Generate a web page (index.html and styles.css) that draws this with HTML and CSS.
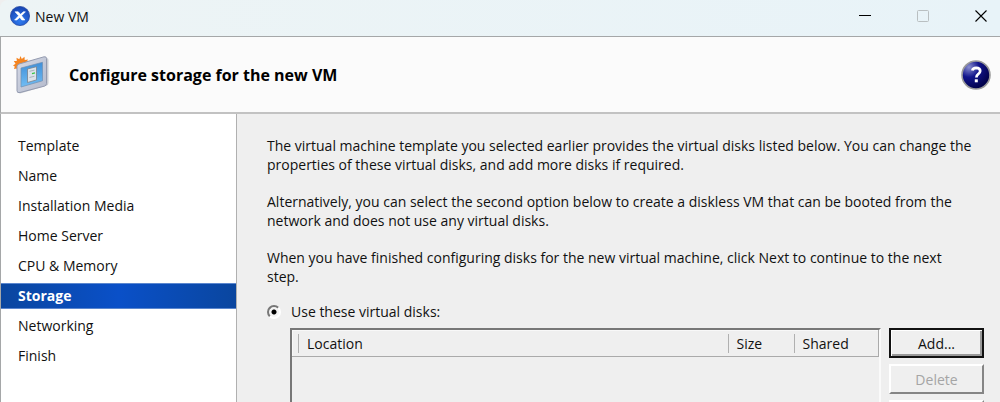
FILE: index.html
```html
<!DOCTYPE html>
<html lang="en">
<head>
    <meta charset="UTF-8">
    <meta name="viewport" content="width=device-width, initial-scale=1.0">
    <title>New VM</title>
    <link rel="stylesheet" href="styles.css">
</head>
<body>
    <div class="window">
        <div class="titlebar">
            <svg class="app-icon" viewBox="0 0 20 20">
                <defs>
                    <radialGradient id="appBlue" cx="50%" cy="75%" r="70%">
                        <stop offset="0" stop-color="#2f7cf0"/>
                        <stop offset="1" stop-color="#1846b4"/>
                    </radialGradient>
                </defs>
                <circle cx="10" cy="10" r="9.6" fill="url(#appBlue)" stroke="#1b3f9c" stroke-width=".7"/>
                <path d="M5 5.800h3.200l2.300 2.500 2.900-2.500h2l-3.800 3.900 3.300 4.300h-3.100l-2-2.600-3 2.600H4.600l4-4.200z" fill="#fff" stroke="#fff" stroke-width=".6"/>
            </svg>
            <span class="title">New VM</span>
            <div class="window-controls">
                <button type="button" aria-label="Minimize">
                    <svg viewBox="0 0 14 14"><path d="M1 6.500h12" stroke="#000"/></svg>
                </button>
                <button type="button" aria-label="Maximize" disabled>
                    <svg viewBox="0 0 14 14"><rect x="1.500" y="1.500" width="11" height="11" rx="1" fill="none" stroke="#b9bfc1"/></svg>
                </button>
                <button type="button" aria-label="Close">
                    <svg viewBox="0 0 14 14"><path d="M1.500 1.500l11 11M12.500 1.500l-11 11" stroke="#000" stroke-width="1.100"/></svg>
                </button>
            </div>
        </div>

        <div class="header">
            <svg class="vm-icon" viewBox="0 0 36 40">
                <defs>
                    <linearGradient id="frame" x1="0" y1="0" x2="1" y2="1">
                        <stop offset="0" stop-color="#d5d9e6"/>
                        <stop offset="1" stop-color="#b4bacb"/>
                    </linearGradient>
                    <linearGradient id="screen" x1="0" y1="0" x2="0" y2="1">
                        <stop offset="0" stop-color="#3f8fd8"/>
                        <stop offset="1" stop-color="#72bdf3"/>
                    </linearGradient>
                </defs>
                <path d="M7.500 1l1.300 3 2.700-2.300.2 3.300 3.300-.5-1.500 2.800 2 1.700-3 1.500-8 5-1-2-2.500.5.8-2.500L0 10.500l2.500-1.700L.8 6l3-.1-.3-3.100 2.800 1.500z" fill="#f5841f"/>
                <path d="M5.500 13q0-2 2-2.500L33 3q2.500-.4 2.500 2v23q0 2-2 2.800L8 38.300q-3 .7-3-2z" fill="#8f94a2" opacity=".45"/>
                <path d="M4 11.500Q4 9.600 6 9L31 1.800q2.500-.5 2.500 1.700v25q0 2-2 2.600L7 37.500q-3 .8-3-1.700z" fill="url(#frame)" stroke="#949bb0" stroke-width="1"/>
                <path d="M8 13l21.500-5.700v18.500L8 32z" fill="url(#screen)" stroke="#6f8fb3" stroke-width=".7"/>
                <path d="M14.500 14l9-2.300v13.200l-9 2.600z" fill="#dce3ea" stroke="#77828d" stroke-width=".8"/>
                <path d="M16.500 16.300l5-1.200M16.500 22.500l5-1.300" stroke="#a4aeb8" stroke-width=".9"/>
                <path d="M19 18.600l3-.7" stroke="#35c546" stroke-width="1.300"/>
            </svg>
            <h1>Configure storage for the new VM</h1>
            <button type="button" class="help" aria-label="Help">
                <svg viewBox="0 0 30 30">
                    <defs>
                        <radialGradient id="helpBlue" cx="25%" cy="22%" r="80%">
                            <stop offset="0" stop-color="#8a8fd0"/>
                            <stop offset=".45" stop-color="#12158c"/>
                            <stop offset="1" stop-color="#02024c"/>
                        </radialGradient>
                    </defs>
                    <circle cx="15" cy="15" r="14" fill="url(#helpBlue)" stroke="#9a9a9a" stroke-width="1.600"/>
                    <path d="M11.300 10.500q.6-2.600 3.900-2.600 4 .1 4 3.200 0 1.700-2 3-1.800 1.200-1.800 3.300" fill="none" stroke="#fff" stroke-width="2.700"/>
                    <rect x="13.800" y="19.300" width="3" height="3" fill="#fff"/>
                </svg>
            </button>
        </div>

        <div class="main">
            <ul class="steps">
                <li>Template</li>
                <li>Name</li>
                <li>Installation Media</li>
                <li>Home Server</li>
                <li>CPU &amp; Memory</li>
                <li class="active">Storage</li>
                <li>Networking</li>
                <li>Finish</li>
            </ul>

            <div class="content">
                <p>The virtual machine template you selected earlier provides the virtual disks listed below. You can change the properties of these virtual disks, and add more disks if required.</p>
                <p>Alternatively, you can select the second option below to create a diskless VM that can be booted from the network and does not use any virtual disks.</p>
                <p>When you have finished configuring disks for the new virtual machine, click Next to continue to the next<br>step.</p>

                <div class="option">
                    <input type="radio" id="useDisks" name="diskOption" checked>
                    <label for="useDisks">Use these virtual disks:</label>
                </div>

                <div class="disks">
                    <div class="disk-list">
                        <table>
                            <thead>
                                <tr>
                                    <th class="col-location"><span>Location</span></th>
                                    <th class="col-size"><span>Size</span></th>
                                    <th class="col-shared"><span>Shared</span></th>
                                </tr>
                            </thead>
                            <tbody></tbody>
                        </table>
                    </div>
                    <div class="disk-buttons">
                        <button type="button" class="default">Add...</button>
                        <button type="button" disabled>Delete</button>
                        <button type="button" disabled></button>
                    </div>
                </div>
            </div>
        </div>
    </div>
</body>
</html>
```
FILE: styles.css
```css
* {
    box-sizing: border-box;
}

body {
    margin: 0;
    font-family: "Open Sans", "Noto Sans", sans-serif;
    font-size: 14px;
    line-height: 19px;
    color: #111;
}

.window {
    display: flex;
    flex-direction: column;
    height: 100vh;
    overflow: hidden;
    background-color: #efefef;
}

.titlebar {
    display: flex;
    align-items: center;
    height: 36px;
    padding: 0 12px 4px 10px;
    background: linear-gradient(to right, #edf4f5, #e8f3f8);
    border-radius: 8px 0 0 0;
}

.app-icon {
    width: 20px;
    height: 20px;
}

.title {
    margin-left: 5px;
}

.window-controls {
    display: flex;
    gap: 44px;
    margin-left: auto;
}

.window-controls button {
    width: 14px;
    height: 14px;
    padding: 0;
    border: none;
    background: none;
}

.window-controls svg,
.help svg {
    display: block;
    width: 100%;
    height: 100%;
}

.header {
    display: flex;
    align-items: center;
    height: 78px;
    padding: 0 9px 0 12px;
    background-color: #fbfbfb;
    border-top: 1px solid #a5a7a8;
    border-bottom: 2px solid #c2c2c2;
    border-left: 1px solid #a5a7a8;
}

.vm-icon {
    width: 36px;
    height: 40px;
}

h1 {
    flex: 1;
    margin: 0 0 0 20px;
    padding-top: 2px;
    font-size: 16px;
    font-weight: bold;
    color: #000;
}

.help {
    width: 30px;
    height: 30px;
    padding: 0;
    border: none;
    background: none;
}

.main {
    display: flex;
    flex: 1;
    min-height: 0;
    border-left: 1px solid #a5a7a8;
}

.steps {
    display: flex;
    flex-direction: column;
    flex: none;
    gap: 4px;
    width: 236px;
    margin: 0;
    padding: 19px 0 0;
    list-style: none;
    background-color: #fff;
    border-right: 1px solid #b0b0b0;
}

.steps li {
    height: 26px;
    padding: 3px 17px;
}

.steps .active {
    font-weight: bold;
    color: #fff;
    background: linear-gradient(to right, #0a469f, #0a50c8, #0a469f);
    border-top: 1px solid #5b87cf;
    border-bottom: 1px solid #5b87cf;
    padding: 2px 17px;
}

.content {
    display: flex;
    flex-direction: column;
    flex: 1;
    min-width: 0;
    padding: 22px 16px 0 30px;
}

.content p {
    margin: 0 0 18px;
}

.option {
    display: flex;
    align-items: center;
    gap: 10px;
    margin-top: -2px;
}

.option input {
    appearance: none;
    width: 14px;
    height: 14px;
    margin: 0;
    background: radial-gradient(circle, #000 0 2px, #f4f4f4 3px);
    border: 2px solid;
    border-color: #777 #fff #fff #777;
    border-radius: 50%;
}

.disks {
    display: flex;
    flex: 1;
    gap: 8px;
    margin-top: 7px;
    padding-left: 23px;
}

.disk-list {
    flex: 1;
    border: 2px solid;
    border-color: #777 #fafafa #fafafa #777;
}

table {
    width: 100%;
    border-collapse: collapse;
    table-layout: fixed;
}

thead {
    border: 1px solid #aaa;
    border-top-color: #f8f8f8;
    border-left-color: #f8f8f8;
}

th {
    padding: 3px 0;
    font-weight: normal;
    text-align: left;
}

th span {
    display: block;
    padding-left: 8px;
    border-left: 1px solid #b0b0b0;
}

.col-location {
    padding-left: 5px;
}

.col-size {
    width: 66px;
}

.col-shared {
    width: 85px;
}

.disk-buttons {
    display: flex;
    flex-direction: column;
    flex: none;
    gap: 6px;
    width: 95px;
}

.disk-buttons button {
    height: 30px;
    flex: none;
    padding: 0;
    font-family: inherit;
    font-size: 14px;
    color: #111;
    background-color: #efefef;
    border: 2px solid;
    border-color: #fff #858585 #858585 #fff;
}

.disk-buttons .default {
    border: 2px solid #111;
    box-shadow: inset 1px 1px #fff, inset -2px -2px #999;
}

.disk-buttons button:disabled {
    color: #a5a5a5;
}
```
